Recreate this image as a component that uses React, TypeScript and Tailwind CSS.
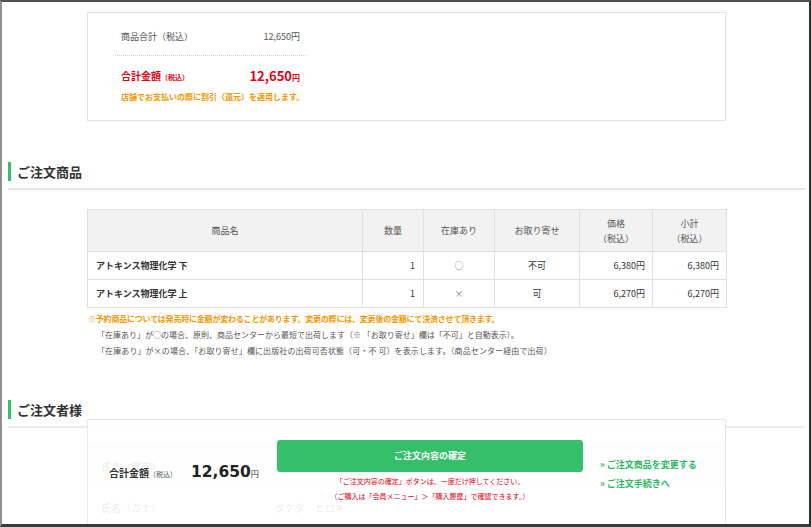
import React from "react";

const jp = { fontFamily: '"Noto Sans CJK JP", "Noto Sans", sans-serif' };

export default function App() {
  const rows = [
    { name: "アトキンス物理化学 下", qty: "1", stock: "○", order: "不可", price: "6,380円", sub: "6,380円" },
    { name: "アトキンス物理化学 上", qty: "1", stock: "×", order: "可", price: "6,270円", sub: "6,270円" },
  ];
  return (
    <div
      style={jp}
      className="relative w-[811px] h-[527px] overflow-hidden bg-white border-t-2 border-t-[#505050] border-l-2 border-l-[#8f8f8f] border-r-2 border-r-[#2e2e2e] border-b-[3px] border-b-[#3a3a3a] text-[#333]"
    >
      {/* Summary box */}
      <div className="mt-[10px] ml-[85px] w-[639px] h-[109px] border border-[#e3e3e3]">
        <div className="ml-[27px] w-[191px]">
          <div className="mt-[14px] h-[20px] px-[6px] flex items-center justify-between text-[9px] text-[#555]">
            <span>商品合計（税込）</span>
            <span>12,650円</span>
          </div>
          <div className="mt-[8px] border-t border-dotted border-[#cfcfcf]" />
          <div className="mt-[9px] h-[20px] px-[6px] flex items-center justify-between text-[#e60012] font-bold">
            <span className="text-[10px]">
              合計金額<span className="text-[7px]">（税込）</span>
            </span>
            <span className="text-[13px] leading-none">
              12,650<span className="text-[8px]">円</span>
            </span>
          </div>
          <div className="mt-[5px] h-[14px] px-[6px] flex items-center text-[8px] font-bold text-[#f39800] whitespace-nowrap">
            店舗でお支払いの際に割引（還元）を適用します。
          </div>
        </div>
      </div>

      {/* Heading 1 */}
      <div className="mt-[41px] ml-[6px] h-[19px] flex items-center border-l-[3px] border-[#34c06c]">
        <span className="pl-[6px] text-[13px] font-bold leading-[19px] text-[#333]">ご注文商品</span>
      </div>
      <div className="mt-[7px] ml-[6px] w-[797px] h-[2px] bg-[#e6e6e6]" />

      {/* Table */}
      <table className="mt-[19px] ml-[85px] w-[639px] border-collapse table-fixed text-[9px]">
        <colgroup>
          <col className="w-[275px]" />
          <col className="w-[61px]" />
          <col className="w-[71px]" />
          <col className="w-[85px]" />
          <col className="w-[73px]" />
          <col className="w-[74px]" />
        </colgroup>
        <thead>
          <tr className="h-[42px] bg-[#f2f2f2] text-[#555]">
            <th className="border border-[#e0e0e0] font-normal">商品名</th>
            <th className="border border-[#e0e0e0] font-normal">数量</th>
            <th className="border border-[#e0e0e0] font-normal">在庫あり</th>
            <th className="border border-[#e0e0e0] font-normal">お取り寄せ</th>
            <th className="border border-[#e0e0e0] font-normal leading-[15px]">
              価格
              <br />
              （税込）
            </th>
            <th className="border border-[#e0e0e0] font-normal leading-[15px]">
              小計
              <br />
              （税込）
            </th>
          </tr>
        </thead>
        <tbody>
          {rows.map((r) => (
            <tr key={r.name} className="h-[28px]">
              <td className="border border-[#e0e0e0] pl-[8px] font-semibold text-[#333]">{r.name}</td>
              <td className="border border-[#e0e0e0] pr-[8px] text-right">{r.qty}</td>
              <td className="border border-[#e0e0e0] text-center text-[#777]">{r.stock}</td>
              <td className="border border-[#e0e0e0] text-center">{r.order}</td>
              <td className="border border-[#e0e0e0] pr-[7px] text-right">{r.price}</td>
              <td className="border border-[#e0e0e0] pr-[7px] text-right">{r.sub}</td>
            </tr>
          ))}
        </tbody>
      </table>

      {/* Notes */}
      <div className="mt-[3px] text-[8px] leading-[16px] whitespace-nowrap">
        <div className="ml-[86px] font-bold text-[#f39800] tracking-[-0.2px]">
          ※予約商品については発売時に金額が変わることがあります。変更の際には、変更後の金額にて決済させて頂きます。
        </div>
        <div className="ml-[95px] text-[#555]">
          「在庫あり」が○の場合、原則、商品センターから最短で出荷します（※ 「お取り寄せ」欄は「不可」と自動表示）。
        </div>
        <div className="ml-[95px] text-[#555] tracking-[0.1px]">
          「在庫あり」が×の場合、「お取り寄せ」欄に出版社の出荷可否状態（可・不 可）を表示します。（商品センター経由で出荷）
        </div>
      </div>

      {/* Heading 2 */}
      <div className="mt-[41px] ml-[6px] h-[19px] flex items-center border-l-[3px] border-[#34c06c]">
        <span className="pl-[6px] text-[13px] font-bold leading-[19px] text-[#333]">ご注文者様</span>
      </div>
      <div className="mt-[7px] ml-[6px] w-[797px] h-[2px] bg-[#ececec]" />

      {/* Form behind overlay */}
      <div className="mt-[18px] ml-[85px] w-[639px] text-[10px] text-[#666]">
        <div className="h-[41px] flex items-center border-t border-b border-[#e0e0e0] bg-[#f7f7f7]">
          <span className="w-[188px] pl-[14px]">氏名（漢字）</span>
          <span>武田　弘樹</span>
        </div>
        <div className="h-[41px] flex items-center border-b border-[#e0e0e0]">
          <span className="w-[188px] pl-[14px]">氏名（カナ）</span>
          <span>タケダ　ヒロキ</span>
        </div>
      </div>

      {/* Fixed order bar overlay */}
      <div className="absolute left-[85px] top-[417px] w-[639px] h-[130px] bg-white/[0.88] border border-[#e8e8e8] flex pt-[20px]">
        <div className="w-[189px] pl-[21px] pt-[21px] flex items-baseline whitespace-nowrap">
          <span className="text-[10px] font-bold text-[#333]">
            合計金額<span className="text-[7px] font-normal text-[#555]">（税込）</span>
          </span>
          <span
            className="ml-[14px] text-[15.5px] font-bold text-[#222]"
            style={{ fontFamily: '"DejaVu Sans", Verdana, sans-serif' }}
          >
            12,650
          </span>
          <span className="text-[8px] text-[#333]">円</span>
        </div>
        <div className="w-[306px] flex flex-col items-center">
          <div className="w-[306px] h-[32px] rounded-[3px] bg-[#35bf6b] flex items-center justify-center text-white text-[9px] font-bold">
            ご注文内容の確定
          </div>
          <div className="mt-[2px] text-[7px] leading-[15px] text-[#e60012] text-center whitespace-nowrap">
            「ご注文内容の確定」ボタンは、一度だけ押してください。
            <br />
            （ご購入は「会員メニュー」＞「購入履歴」で確認できます。）
          </div>
        </div>
        <div className="ml-[17px] mt-[15px] text-[9px] font-bold leading-[19px] text-[#2cb961] whitespace-nowrap">
          <div>» ご注文商品を変更する</div>
          <div>» ご注文手続きへ</div>
        </div>
      </div>
    </div>
  );
}
